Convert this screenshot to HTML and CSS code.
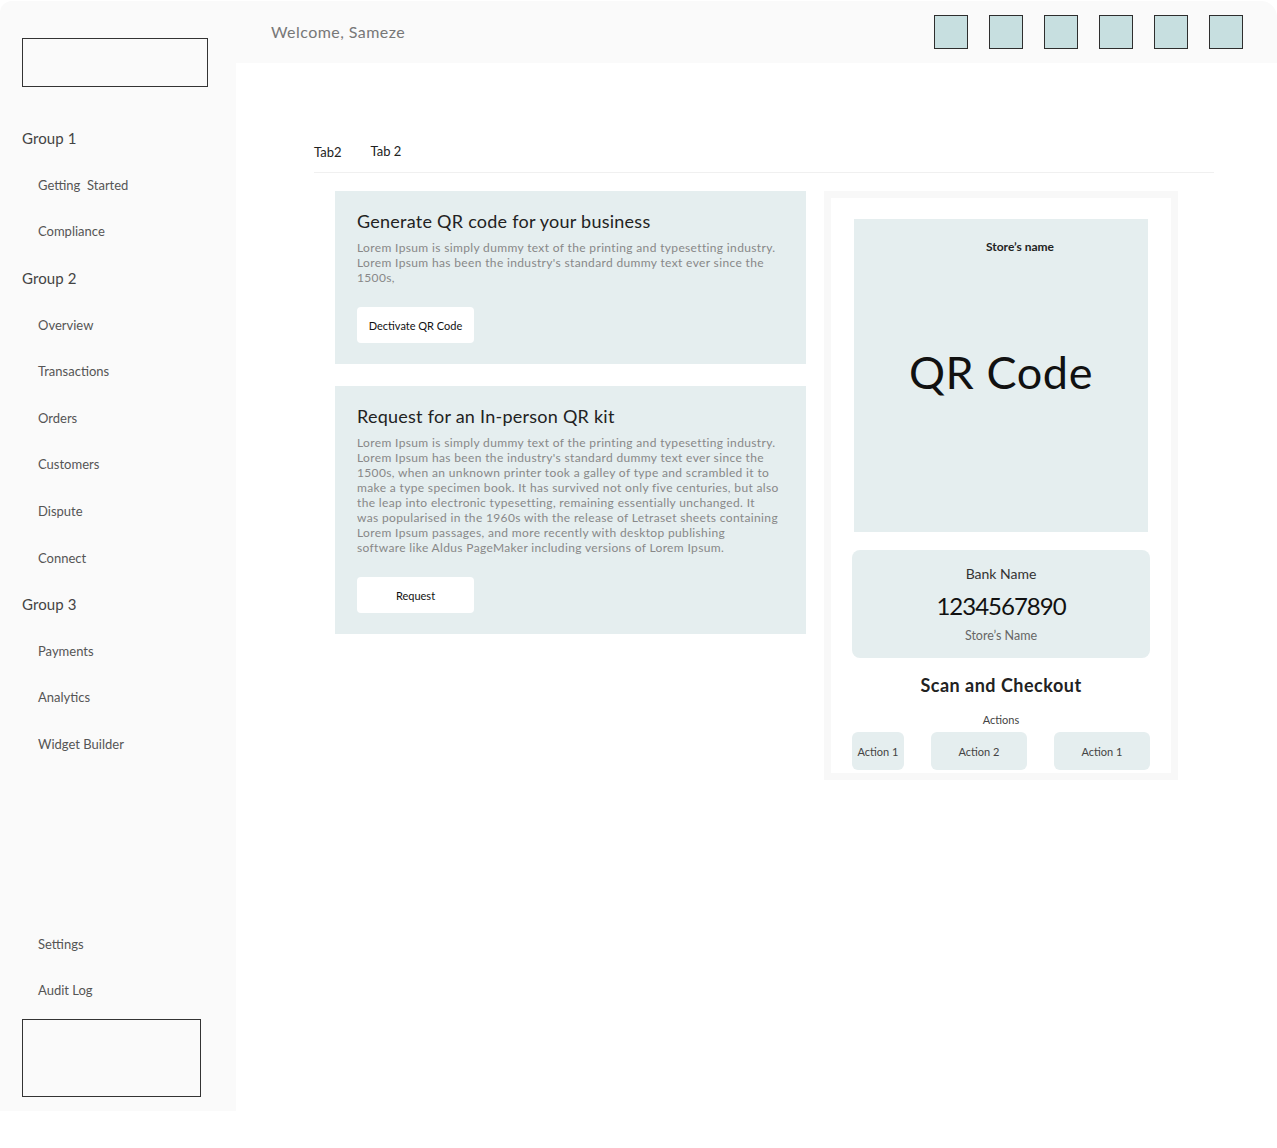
FILE: index.html
```html
<!DOCTYPE html>
<html lang="en">
<head>
<meta charset="utf-8">
<title>QR Code</title>
<link rel="stylesheet" href="styles.css">
</head>
<body>
<div class="app">
  <aside class="sidebar">
    <div class="logo-box"></div>
    <nav class="nav">
      <div class="nav-group">Group 1</div>
      <div class="nav-item">Getting&nbsp; Started</div>
      <div class="nav-item">Compliance</div>
      <div class="nav-group">Group 2</div>
      <div class="nav-item">Overview</div>
      <div class="nav-item">Transactions</div>
      <div class="nav-item">Orders</div>
      <div class="nav-item">Customers</div>
      <div class="nav-item">Dispute</div>
      <div class="nav-item">Connect</div>
      <div class="nav-group">Group 3</div>
      <div class="nav-item">Payments</div>
      <div class="nav-item">Analytics</div>
      <div class="nav-item">Widget Builder</div>
    </nav>
    <div class="nav-bottom">
      <div class="nav-item">Settings</div>
      <div class="nav-item">Audit Log</div>
      <div class="profile-box"></div>
    </div>
  </aside>
  <div class="main">
    <header class="topbar">
      <div class="welcome">Welcome, Sameze</div>
      <div class="top-icons">
        <span class="sq"></span><span class="sq"></span><span class="sq"></span><span class="sq"></span><span class="sq"></span><span class="sq"></span>
      </div>
    </header>
    <section class="content">
      <div class="tabs">
        <span class="tab">Tab2</span>
        <span class="tab tab-second">Tab 2</span>
      </div>
      <div class="columns">
        <div class="left-col">
          <div class="card">
            <h2 class="card-title">Generate QR code for your business</h2>
            <p class="card-text">Lorem Ipsum is simply dummy text of the printing and typesetting industry. Lorem Ipsum has been the industry's standard dummy text ever since the 1500s,</p>
            <button class="btn">Dectivate QR Code</button>
          </div>
          <div class="card">
            <h2 class="card-title">Request for an In-person QR kit</h2>
            <p class="card-text">Lorem Ipsum is simply dummy text of the printing and typesetting industry. Lorem Ipsum has been the industry's standard dummy text ever since the 1500s, when an unknown printer took a galley of type and scrambled it to make a type specimen book. It has survived not only five centuries, but also the leap into electronic typesetting, remaining essentially unchanged. It<br>was popularised in the 1960s with the release of Letraset sheets containing Lorem Ipsum passages, and more recently with desktop publishing<br>software like Aldus PageMaker including versions of Lorem Ipsum.</p>
            <button class="btn">Request</button>
          </div>
        </div>
        <div class="qr-panel">
          <div class="qr-block">
            <div class="store-name">Store’s name</div>
            <div class="qr-label">QR Code</div>
          </div>
          <div class="bank-card">
            <div class="bank-name">Bank Name</div>
            <div class="bank-number">1234567890</div>
            <div class="bank-store">Store’s Name</div>
          </div>
          <div class="scan-title">Scan and Checkout</div>
          <div class="actions-label">Actions</div>
          <div class="actions">
            <button class="action action-small">Action 1</button>
            <button class="action">Action 2</button>
            <button class="action">Action 1</button>
          </div>
        </div>
      </div>
    </section>
  </div>
</div>
</body>
</html>
```
FILE: styles.css
```css
* { box-sizing: border-box; }

html, body {
  margin: 0;
  padding: 0;
  background: #ffffff;
}

body {
  font-family: Lato, "Noto Sans", sans-serif;
  color: #222;
  padding-top: 1px;
}

.app {
  display: flex;
  align-items: flex-start;
}

/* Sidebar */
.sidebar {
  width: 236px;
  height: 1110px;
  background: #fafafa;
  border-top-left-radius: 12px;
  display: flex;
  flex-direction: column;
  padding: 37px 0 14px 22px;
}

.logo-box {
  width: 186px;
  height: 49px;
  border: 1px solid #333;
}

.nav {
  margin-top: 28px;
  display: flex;
  flex-direction: column;
}

.nav-group,
.nav-item {
  height: 46.6px;
  display: flex;
  align-items: center;
}

.nav-group {
  font-size: 15px;
  color: #444;
  letter-spacing: 0.1px;
}

.nav-item {
  font-size: 13px;
  color: #555;
  padding-left: 16px;
}

.nav-bottom {
  margin-top: auto;
  display: flex;
  flex-direction: column;
}

.nav-bottom .nav-item {
  height: 46px;
}

.profile-box {
  margin-top: 6px;
  width: 179px;
  height: 78px;
  border: 1px solid #333;
}

/* Main */
.main {
  flex: 1;
  display: flex;
  flex-direction: column;
}

.topbar {
  height: 62px;
  background: #fafafa;
  border-top-right-radius: 16px;
  display: flex;
  align-items: center;
  justify-content: space-between;
  padding: 0 34px 0 35px;
}

.welcome {
  font-size: 16px;
  letter-spacing: 0.45px;
  color: #777;
  margin-top: -2px;
}

.top-icons {
  display: flex;
  gap: 21px;
}

.sq {
  width: 34px;
  height: 34px;
  background: #c7dfe0;
  border: 1.5px solid #2e2e2e;
}

.content {
  padding: 81px 0 0 78px;
}

.tabs {
  width: 900px;
  display: flex;
  gap: 29px;
  padding-bottom: 12px;
  border-bottom: 1px solid #f0f0f0;
  font-size: 13px;
  color: #222;
}

.tab-second {
  margin-top: -1px;
}

.columns {
  display: flex;
  align-items: flex-start;
  gap: 18px;
  margin: 18px 0 0 21px;
}

.left-col {
  width: 471px;
  display: flex;
  flex-direction: column;
  gap: 22px;
}

.card {
  background: #e5eeef;
  padding: 19px 22px 21px;
}

.card-title {
  margin: 0;
  font-size: 18px;
  line-height: 22px;
  font-weight: 400;
  letter-spacing: 0.25px;
  color: #222;
}

.card-text {
  margin: 8px 0 0;
  font-size: 12px;
  line-height: 15px;
  letter-spacing: 0.35px;
  color: #888;
}

.btn {
  margin-top: 22px;
  width: 117px;
  height: 36px;
  background: #fff;
  border: none;
  border-radius: 4px;
  font-family: inherit;
  font-size: 11px;
  color: #111;
  display: block;
}

/* QR panel */
.qr-panel {
  width: 354px;
  border: 7px solid #f8f8f8;
  background: #fff;
  padding: 21px 21px 3px;
  display: flex;
  flex-direction: column;
  align-items: stretch;
}

.qr-block {
  margin: 0 2px;
  height: 313px;
  background: #e5eeef;
  display: flex;
  flex-direction: column;
  align-items: center;
}

.store-name {
  margin-top: 20px;
  padding-left: 38px;
  font-size: 12px;
  font-weight: 700;
  color: #222;
}

.qr-label {
  margin-top: 92px;
  font-size: 45px;
  line-height: 52px;
  letter-spacing: 0.6px;
  color: #111;
}

.bank-card {
  margin-top: 18px;
  height: 108px;
  background: #e5eeef;
  border-radius: 8px;
  display: flex;
  flex-direction: column;
  align-items: center;
  padding-top: 15px;
}

.bank-name {
  font-size: 14px;
  line-height: 18px;
  color: #333;
}

.bank-number {
  margin-top: 8px;
  font-size: 24px;
  line-height: 30px;
  letter-spacing: -1px;
  color: #111;
}

.bank-store {
  margin-top: 7px;
  font-size: 12.5px;
  line-height: 16px;
  color: #666;
}

.scan-title {
  margin-top: 16px;
  text-align: center;
  font-size: 18px;
  line-height: 22px;
  font-weight: 700;
  letter-spacing: 0.5px;
  color: #222;
}

.actions-label {
  margin-top: 17px;
  text-align: center;
  font-size: 11px;
  line-height: 14px;
  color: #444;
}

.actions {
  margin-top: 5px;
  display: flex;
  justify-content: space-between;
}

.action {
  width: 96px;
  height: 38px;
  background: #e5eeef;
  border: none;
  border-radius: 6px;
  font-family: inherit;
  font-size: 11px;
  color: #444;
}

.action-small {
  width: 52px;
  padding: 0;
}
```
